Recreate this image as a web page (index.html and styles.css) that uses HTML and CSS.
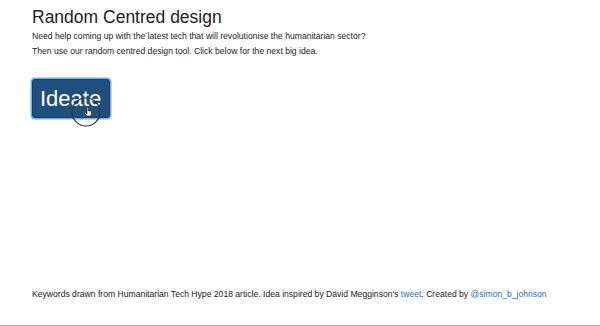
FILE: index.html
```html
<!DOCTYPE html>
<html lang="en">
<head>
  <meta charset="UTF-8" />
  <title>Random Centred design</title>
  <link rel="stylesheet" href="styles.css">
</head>
<body>
  <div class="page">
    <main class="container">
      <h1>Random Centred design</h1>
      <p>Need help coming up with the latest tech that will revolutionise the humanitarian sector?</p>
      <p>Then use our random centred design tool. Click below for the next big idea.</p>
      <div class="btn-wrap">
        <button class="ideate">Ideate</button>
        <svg class="cursor" width="32" height="32" viewBox="0 0 32 32">
          <circle cx="16" cy="16" r="14" fill="none" stroke="#333" stroke-width="1.2"/>
          <path d="M17 12 v6 l-1.2 -1.2 q-0.8 -0.6 -1.3 0.2 l2.2 3 h4 l0.8 -2.4 v-2 q0 -0.7 -0.7 -0.7 h-2.3 v-2.9 q0 -0.8 -0.8 -0.8 q-0.7 0 -0.7 0.8 z" fill="#fff" stroke="#222" stroke-width="0.7"/>
        </svg>
      </div>
    </main>
    <footer class="footer">
      Keywords drawn from Humanitarian Tech Hype 2018 article. Idea inspired by David Megginson's <a href="#">tweet</a>. Created by <a href="#">@simon_b_johnson</a>
    </footer>
  </div>
</body>
</html>
```

FILE: styles.css
```css
html, body { margin: 0; height: 100%; }
body { font-family: "Liberation Sans", Arial, sans-serif; font-size: 8.6px; color: #222; background: #fff; }
.page { height: 325px; border-bottom: 1px solid #bbb; display: flex; flex-direction: column; }
.container { flex: 1; padding: 7px 32px 0; }
h1 { margin: 0 0 3px; font-size: 17.5px; font-weight: normal; color: #222; line-height: 20px; }
p { margin: 0 0 3px; line-height: 12px; }
.btn-wrap { position: relative; display: inline-block; margin-top: 19px; }
.ideate { display: block; font-family: "Liberation Sans", Arial, sans-serif; font-size: 22px; line-height: 25px; color: #fff; background: #1e4f7d; border: 1px solid #17406a; border-radius: 3px; padding: 6px 8px 6px 7px; box-shadow: 0 0 0 1.5px #7aaee6; }
.cursor { position: absolute; left: 38px; top: 17px; }
.footer { padding: 0 32px 25px; line-height: 12px; }
.footer a { color: #2a6fb8; text-decoration: none; }
```
